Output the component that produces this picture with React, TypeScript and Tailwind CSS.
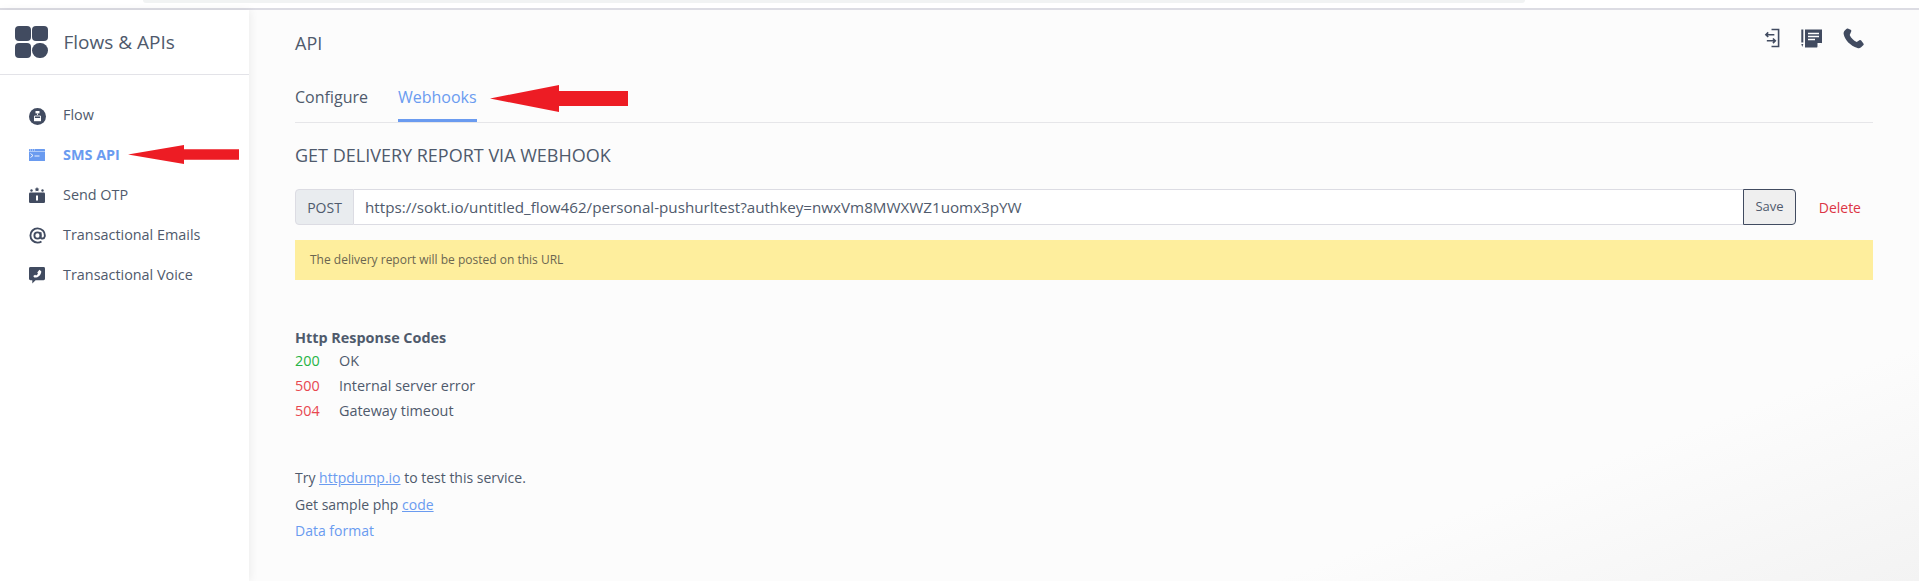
import React from "react";

const Arrow = ({ className, w, h, headAt }: { className: string; w: number; h: number; headAt: number }) => (
  <svg className={className} width={w} height={h} viewBox={`0 0 ${w} ${h}`}>
    <polygon
      fill="#ed1c24"
      points={`0,${h / 2} ${headAt},0 ${headAt},${h * 0.22} ${w},${h * 0.22} ${w},${h * 0.78} ${headAt},${h * 0.78} ${headAt},${h} `}
    />
  </svg>
);

const FlowIcon = () => (
  <svg width="17" height="17" viewBox="0 0 17 17" className="mt-[3px]">
    <circle cx="8.5" cy="8.5" r="8.5" fill="#414b60" />
    <rect x="6.5" y="3" width="4" height="2.4" fill="#fff" />
    <path d="M8.500 5.400V7M5.500 10V8h6v2" stroke="#fff" fill="none" strokeWidth="0.9" />
    <rect x="5" y="10" width="7" height="3.200" fill="#fff" />
  </svg>
);

const ApiIcon = () => (
  <svg width="16" height="12" viewBox="0 0 16 12">
    <rect width="16" height="12" rx="0.5" fill="#6a9bf0" />
    <path d="M1 1h1M3 1h1M5 1h1" stroke="#fff" strokeWidth="0.8" />
    <rect x="0" y="2" width="16" height="0.7" fill="#cfe0fb" />
    <path d="M1.500 4.500l2.500 2-2.500 2" stroke="#fff" fill="none" strokeWidth="0.9" />
    <path d="M5.500 7h5" stroke="#fff" strokeWidth="0.9" />
  </svg>
);

const OtpIcon = () => (
  <svg width="16" height="16" viewBox="0 0 16 16">
    <rect x="0" y="5.500" width="16" height="10.500" rx="1.200" fill="#414b60" />
    <rect x="7" y="8.500" width="2" height="5" fill="#fff" />
    <path d="M8 0l.8 1.400 1.500.3-1 1.100.2 1.500L8 3.700l-1.500.6.200-1.500-1-1.100 1.500-.3z" fill="#414b60" />
    <circle cx="2.500" cy="3.500" r="1.200" fill="#414b60" />
    <circle cx="13.500" cy="3.500" r="1.200" fill="#414b60" />
  </svg>
);

const AtIcon = () => (
  <svg width="17" height="17" viewBox="0 0 18 18" fill="none" stroke="#414b60" strokeWidth="2">
    <circle cx="9" cy="9" r="3.300" />
    <path d="M12.300 5.500v5c0 2.400 3.900 2.400 4.400-.6.600-4.700-3-8.400-7.700-8.400a7.500 7.500 0 0 0 0 15c1.700 0 3-.4 4.200-1.200" />
  </svg>
);

const VoiceIcon = () => (
  <svg width="16" height="17" viewBox="0 0 17 18">
    <path d="M1.500 0h14A1.500 1.500 0 0 1 17 1.500v11a1.500 1.500 0 0 1-1.500 1.500H7l-3.500 3.600V14h-2A1.500 1.500 0 0 1 0 12.500v-11A1.500 1.500 0 0 1 1.500 0z" fill="#414b60" />
    <path d="M11 3l2 1.400c.3 3.600-3.400 7.200-7.400 6.800L4.500 9.400l2-1.200 1 .8c.9-.5 1.600-1.200 2-2.200l-.7-1z" fill="#fff" />
  </svg>
);

const nav = [
  { icon: <FlowIcon />, label: "Flow" },
  { icon: <ApiIcon />, label: "SMS API", active: true },
  { icon: <OtpIcon />, label: "Send OTP" },
  { icon: <AtIcon />, label: "Transactional Emails" },
  { icon: <VoiceIcon />, label: "Transactional Voice" },
];

const codes = [
  { code: "200", text: "OK", color: "text-[#28b446]" },
  { code: "500", text: "Internal server error", color: "text-[#e8474f]" },
  { code: "504", text: "Gateway timeout", color: "text-[#e8474f]" },
];

export default function App() {
  return (
    <div className="relative h-[581px] w-[1919px] overflow-hidden bg-white text-[#4f5a6c] font-['Open_Sans','Noto_Sans',sans-serif]">
      <div className="h-[8px] bg-white">
        <div className="ml-[143px] h-[3px] w-[1382px] rounded-bl-[6px] rounded-br-[6px] bg-[#f1f3f3]" />
      </div>
      <div className="h-[2px] bg-[#dcdce3]" />
      <div className="flex h-[571px]">
        <aside className="z-10 w-[249px] shrink-0 bg-white shadow-[2px_0_8px_rgba(0,0,0,0.06)]">
          <div className="flex h-[65px] items-center gap-[16px] border-b border-[#e3e3e8] pl-[15px]">
            <div className="grid grid-cols-2 gap-[1.5px]">
              <div className="h-[15.5px] w-[15.5px] rounded-[4px] bg-[#414b60]" />
              <div className="h-[15.5px] w-[15.5px] rounded-[4px] bg-[#414b60]" />
              <div className="h-[15.5px] w-[15.5px] rounded-[4px] bg-[#414b60]" />
              <div className="h-[15.5px] w-[15.5px] rounded-full bg-[#414b60]" />
            </div>
            <span className="text-[19px] leading-[24px]">Flows &amp; APIs</span>
          </div>
          <nav className="flex flex-col gap-[18px] pl-[29px] pt-[29px]">
            {nav.map((n) => (
              <div key={n.label} className="flex h-[22px] items-center">
                <span className="flex w-[34px] shrink-0 items-center">{n.icon}</span>
                <span className={n.active ? "text-[14.4px] font-bold text-[#6a9bf0]" : "text-[14.4px] text-[#4f5a6c]"}>{n.label}</span>
              </div>
            ))}
          </nav>
        </aside>

        <main className="flex-1 bg-[linear-gradient(160deg,#fcfcfc_80%,#f3f3f3_100%)] pl-[46px] pr-[46px]">
          <div className="flex h-[64px] justify-between">
            <h1 className="self-center pt-[2px] text-[18px] leading-[24px]">API</h1>
            <div className="mr-[9px] mt-[18px] flex items-start gap-[21px] self-start">
              <svg width="16" height="20" viewBox="0 0 17 20" fill="none" stroke="#414b60" strokeWidth="1.700">
                <path d="M8 1h7.500v18H8" />
                <path d="M11 6.500H2M4.500 4L2 6.500 4.500 9M3 13h9M9.500 10.500L12 13l-2.500 2.500" />
              </svg>
              <svg width="21" height="19" viewBox="0 0 21 19" className="mt-[1px]">
                <path d="M4 0.500h17v13L16 18.500H4z" fill="#414b60" />
                <path d="M7 4.500h11M7 7.500h11M7 10.500h7" stroke="#fff" strokeWidth="1.300" />
                <path d="M16.500 18.500v-4.500H21z" fill="#fff" />
                <rect x="0.300" y="0.500" width="2" height="13" fill="#414b60" />
                <path d="M0.300 15h2l-1 3z" fill="#414b60" />
              </svg>
              <svg width="21" height="21" viewBox="0 0 21 21">
                <path d="M4.800 0.500L7.600 1.800c.7.4.9 1.100.6 1.800L6.700 7c1.300 3 3.800 5.600 7 7l2.700-1.800c.6-.4 1.400-.3 1.800.3l2.200 2.900c.5.6.4 1.400-.2 1.900l-2.100 1.900c-1 .9-2.400 1.200-3.600.8C7 17.500 2 12 .7 6.200.4 4.900.8 3.400 1.800 2.400L3.300.9c.4-.4 1-.6 1.500-.4z" fill="#414b60" />
              </svg>
            </div>
          </div>

          <div className="flex h-[49px] items-stretch gap-[30px] border-b border-[#e6e6e9]">
            <div className="pt-[11px] text-[16px] leading-[24px]">Configure</div>
            <div className="border-b-[3px] border-[#6a9bf0] pt-[11px] text-[16px] leading-[24px] text-[#6a9bf0]">Webhooks</div>
          </div>

          <h2 className="mt-[20px] text-[18px] leading-[24px]">GET DELIVERY REPORT VIA WEBHOOK</h2>

          <div className="mt-[22px] flex h-[36px] items-stretch">
            <div className="flex w-[59px] items-center justify-center rounded-l-[4px] border border-[#dcdce3] bg-[#e9ecef] text-[14px]">POST</div>
            <div className="flex flex-1 items-center border-y border-r-0 border-[#dcdce3] bg-white pl-[11px] text-[15.2px]">
              https://sokt.io/untitled_flow462/personal-pushurltest?authkey=nwxVm8MWXWZ1uomx3pYW
            </div>
            <button className="flex w-[53px] items-center justify-center rounded-r-[4px] border border-[#414b60] bg-[#efefef] text-[13px]">Save</button>
            <span className="flex w-[77px] items-center justify-end pr-[12px] text-[14px] text-[#dc3545]">Delete</span>
          </div>

          <div className="mt-[15px] flex h-[40px] items-center bg-[#feee9d] pl-[15px] text-[12px] text-[#6b6650]">
            The delivery report will be posted on this URL
          </div>

          <div className="mt-[48px] text-[14.4px] font-bold leading-[20px]">Http Response Codes</div>
          <div className="flex flex-col text-[14.4px] leading-[25px]">
            {codes.map((c) => (
              <div key={c.code} className="flex">
                <span className={`w-[44px] ${c.color}`}>{c.code}</span>
                <span>{c.text}</span>
              </div>
            ))}
          </div>

          <div className="mt-[42px] flex flex-col text-[14px] leading-[26.5px]">
            <div>
              Try <span className="text-[#6a9bf0] underline">httpdump.io</span> to test this service.
            </div>
            <div>
              Get sample php <span className="text-[#6a9bf0] underline">code</span>
            </div>
            <div className="text-[#6a9bf0]">Data format</div>
          </div>
        </main>
      </div>

      <Arrow className="absolute left-[128px] top-[145px] z-20" w={111} h={19} headAt={56} />
      <Arrow className="absolute left-[490px] top-[85px] z-20" w={138} h={27} headAt={69} />
    </div>
  );
}
